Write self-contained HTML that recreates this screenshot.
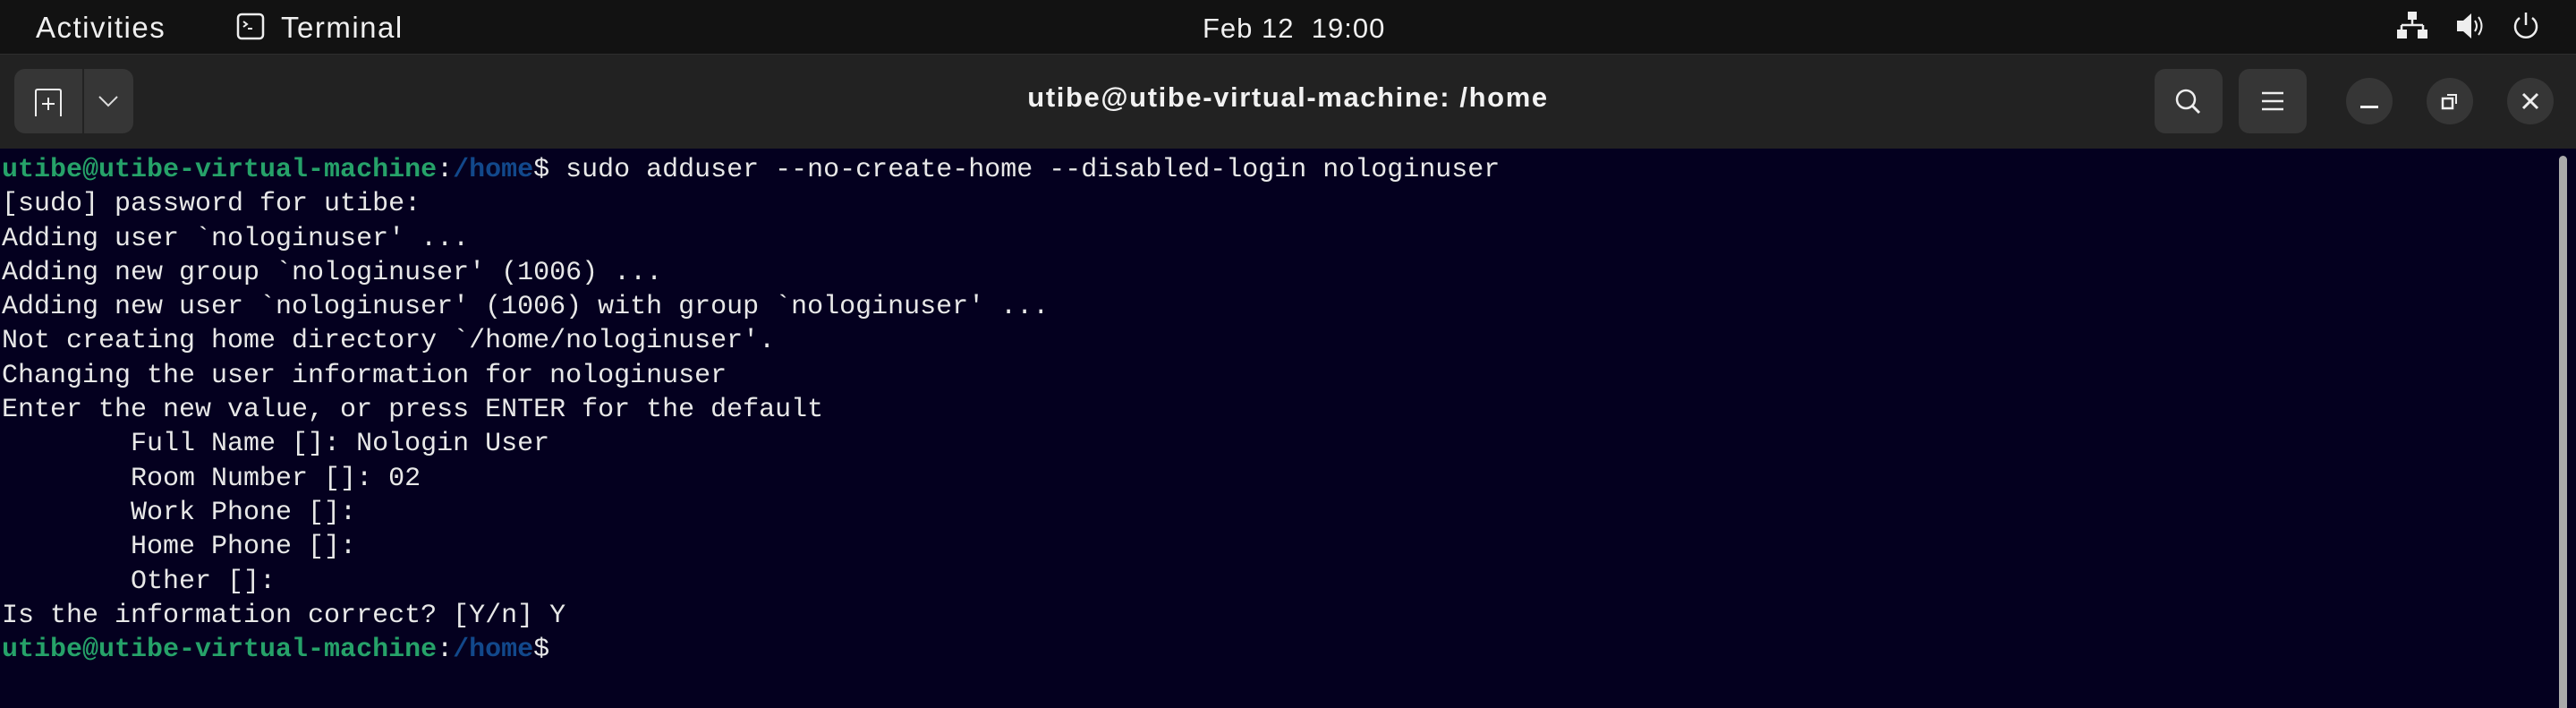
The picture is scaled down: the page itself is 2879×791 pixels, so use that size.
<!DOCTYPE html>
<html><head><style>
html,body{margin:0;padding:0;width:2879px;height:791px;overflow:hidden;background:#04001f;}
body{position:relative;font-family:"Liberation Sans",sans-serif;}
#top{position:absolute;left:0;top:0;width:2879px;height:60px;background:#121212;color:#f0f0f0;font-size:32px;}
#hdr{position:absolute;left:0;top:60px;width:2879px;height:106px;background:#222;border-top:1px solid #2e2e2e;box-sizing:border-box;}
.btn{position:absolute;background:#363636;border-radius:12px;}
.circ{position:absolute;width:52px;height:52px;border-radius:50%;background:#363636;}
#term{position:absolute;left:0;top:166px;width:2879px;height:625px;background:#04001f;}
pre{margin:0;position:absolute;left:2px;top:5px;font-family:"Liberation Mono",monospace;font-size:30px;line-height:38.3px;color:#e8e8e8;letter-spacing:0;}
.g{color:#26a269;font-weight:bold}.b{color:#12488b;font-weight:bold}
</style></head><body>
<div id="top">
<div style="position:absolute;left:40px;top:12px;font-size:33px;letter-spacing:1.5px">Activities</div>
<svg style="position:absolute;left:264px;top:14px" width="32" height="32" viewBox="0 0 32 32"><rect x="2" y="2" width="28" height="27" rx="4" fill="none" stroke="#eee" stroke-width="2.5"/><path d="M8 10l4 3-4 3M13 18h5" stroke="#eee" stroke-width="2" fill="none"/></svg>
<div style="position:absolute;left:314px;top:12px;font-size:33px;letter-spacing:1.5px">Terminal</div>
<div style="position:absolute;left:1344px;top:14px;font-size:31px;letter-spacing:1px">Feb 12&nbsp; 19:00</div>
<svg style="position:absolute;left:2678px;top:12px" width="36" height="32" viewBox="0 0 36 32"><rect x="13" y="1" width="10" height="9" fill="#eee"/><path d="M18 10v6M6 16h24M6 16v6M30 16v6" stroke="#eee" stroke-width="2.5" fill="none"/><rect x="1" y="21" width="11" height="10" fill="#eee"/><rect x="24" y="21" width="11" height="10" fill="#eee"/></svg>
<svg style="position:absolute;left:2744px;top:12px" width="34" height="34" viewBox="0 0 34 34"><path d="M2 11h7l9-8v28l-9-8H2z" fill="#eee"/><path d="M22 11q4 6 0 12M26 7q7 10 0 20" stroke="#eee" stroke-width="2" fill="none"/></svg>
<svg style="position:absolute;left:2806px;top:12px" width="34" height="34" viewBox="0 0 34 34"><path d="M10 8a12 12 0 1 0 14 0" stroke="#eee" stroke-width="2.5" fill="none"/><path d="M17 2v14" stroke="#eee" stroke-width="2.5"/></svg>
</div>
<div id="hdr">
<div class="btn" style="left:16px;top:16px;width:133px;height:72px"></div>
<div style="position:absolute;left:92px;top:16px;width:2px;height:72px;background:#222"></div>
<svg style="position:absolute;left:38px;top:37px" width="34" height="34" viewBox="0 0 34 34"><path d="M2 32V4q0-2 2-2h24q2 0 2 2v28" stroke="#eee" stroke-width="2" fill="none"/><path d="M16 11v14M9 18h14" stroke="#eee" stroke-width="2"/></svg>
<svg style="position:absolute;left:109px;top:45px" width="24" height="14" viewBox="0 0 24 14"><path d="M2 2l10 10 10-10" stroke="#ddd" stroke-width="2" fill="none"/></svg>
<div style="position:absolute;left:0;width:2879px;top:30px;text-align:center;color:#f2f2f2;font-weight:bold;font-size:31px;letter-spacing:1.6px">utibe@utibe-virtual-machine: /home</div>
<div class="btn" style="left:2408px;top:16px;width:76px;height:72px"></div>
<svg style="position:absolute;left:2428px;top:35px" width="36" height="36" viewBox="0 0 36 36"><circle cx="15" cy="15" r="10" stroke="#eee" stroke-width="2.5" fill="none"/><path d="M22 22l8 8" stroke="#eee" stroke-width="3"/></svg>
<div class="btn" style="left:2502px;top:16px;width:76px;height:72px"></div>
<svg style="position:absolute;left:2527px;top:40px" width="26" height="24" viewBox="0 0 26 24"><path d="M1 3h24M1 12h24M1 21h24" stroke="#eee" stroke-width="2.5"/></svg>
<div class="circ" style="left:2622px;top:26px"></div>
<div style="position:absolute;left:2638px;top:57px;width:20px;height:3px;background:#eee"></div>
<div class="circ" style="left:2712px;top:26px"></div>
<svg style="position:absolute;left:2727px;top:42px" width="22" height="22" viewBox="0 0 22 22"><rect x="3" y="7" width="11" height="11" stroke="#eee" stroke-width="2.5" fill="none"/><path d="M8 3h10v10" stroke="#eee" stroke-width="2" fill="none"/></svg>
<div class="circ" style="left:2802px;top:26px"></div>
<svg style="position:absolute;left:2817px;top:41px" width="22" height="22" viewBox="0 0 22 22"><path d="M3 3l16 16M19 3L3 19" stroke="#eee" stroke-width="3"/></svg>
</div>
<div id="term">
<pre><span class="g">utibe@utibe-virtual-machine</span>:<span class="b">/home</span>$ sudo adduser --no-create-home --disabled-login nologinuser
[sudo] password for utibe:
Adding user `nologinuser' ...
Adding new group `nologinuser' (1006) ...
Adding new user `nologinuser' (1006) with group `nologinuser' ...
Not creating home directory `/home/nologinuser'.
Changing the user information for nologinuser
Enter the new value, or press ENTER for the default
        Full Name []: Nologin User
        Room Number []: 02
        Work Phone []:
        Home Phone []:
        Other []:
Is the information correct? [Y/n] Y
<span class="g">utibe@utibe-virtual-machine</span>:<span class="b">/home</span>$ </pre>
<div style="position:absolute;left:2860px;top:8px;width:9px;height:625px;border-radius:5px;background:#aaa"></div>
</div>
</body></html>
